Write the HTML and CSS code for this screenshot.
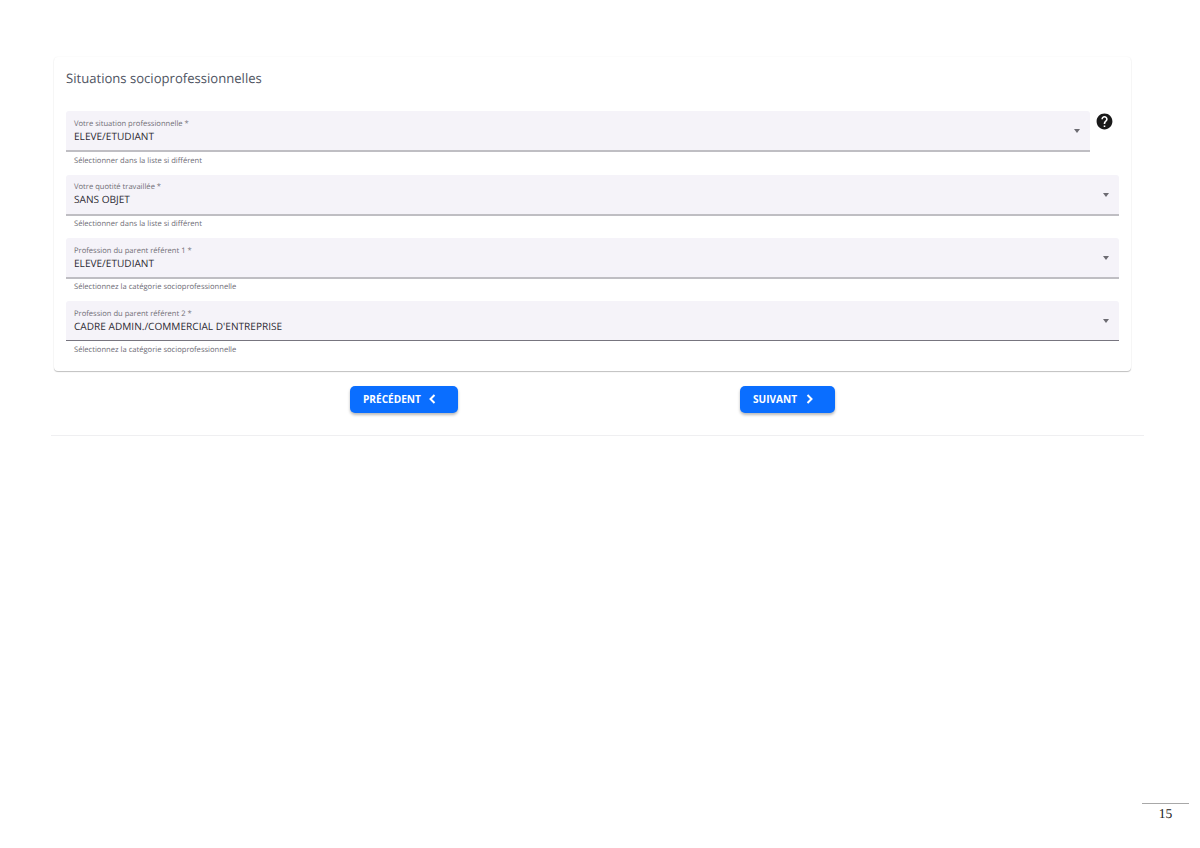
FILE: index.html
```html
<!DOCTYPE html>
<html lang="fr">
<head>
<meta charset="utf-8">
<title>Situations socioprofessionnelles</title>
<link rel="stylesheet" href="styles.css">
</head>
<body>
<main class="page">
  <section class="card">
    <h2 class="card-title">Situations socioprofessionnelles</h2>
    <div class="fields">
      <div class="field-row">
        <div class="field">
          <div class="control">
            <div class="control-text">
              <span class="label">Votre situation professionnelle *</span>
              <span class="value">ELEVE/ETUDIANT</span>
            </div>
            <span class="arrow"></span>
          </div>
          <div class="hint">Sélectionner dans la liste si différent</div>
        </div>
        <svg class="help" viewBox="0 0 24 24"><path fill="#1a1a1a" d="M12 2C6.48 2 2 6.48 2 12s4.48 10 10 10 10-4.48 10-10S17.52 2 12 2zm1 17h-2v-2h2v2zm2.07-7.75l-.9.92C13.45 12.9 13 13.5 13 15h-2v-.5c0-1.1.45-2.1 1.17-2.83l1.24-1.26c.37-.36.59-.86.59-1.41 0-1.1-.9-2-2-2s-2 .9-2 2H8c0-2.21 1.79-4 4-4s4 1.79 4 4c0 .88-.36 1.68-.93 2.25z"/></svg>
      </div>
      <div class="field-row">
        <div class="field">
          <div class="control">
            <div class="control-text">
              <span class="label">Votre quotité travaillée *</span>
              <span class="value">SANS OBJET</span>
            </div>
            <span class="arrow"></span>
          </div>
          <div class="hint">Sélectionner dans la liste si différent</div>
        </div>
      </div>
      <div class="field-row">
        <div class="field">
          <div class="control">
            <div class="control-text">
              <span class="label">Profession du parent référent 1 *</span>
              <span class="value">ELEVE/ETUDIANT</span>
            </div>
            <span class="arrow"></span>
          </div>
          <div class="hint">Sélectionnez la catégorie socioprofessionnelle</div>
        </div>
      </div>
      <div class="field-row">
        <div class="field">
          <div class="control control-dark">
            <div class="control-text">
              <span class="label">Profession du parent référent 2 *</span>
              <span class="value">CADRE ADMIN./COMMERCIAL D'ENTREPRISE</span>
            </div>
            <span class="arrow"></span>
          </div>
          <div class="hint">Sélectionnez la catégorie socioprofessionnelle</div>
        </div>
      </div>
    </div>
  </section>
  <div class="actions">
    <button class="btn btn-prev" type="button">PRÉCÉDENT
      <svg viewBox="0 0 12 12" width="12" height="12"><path fill="none" stroke="#fff" stroke-width="2" d="M8.5 2L4.5 6l4 4"/></svg>
    </button>
    <button class="btn btn-next" type="button">SUIVANT
      <svg viewBox="0 0 12 12" width="12" height="12"><path fill="none" stroke="#fff" stroke-width="2" d="M3.5 2l4 4-4 4"/></svg>
    </button>
  </div>
  <hr class="rule">
  <footer class="page-number">15</footer>
</main>
</body>
</html>
```
FILE: styles.css
```css
* { box-sizing: border-box; }
html, body { margin: 0; height: 100%; background: #fff; }
body { font-family: "Open Sans", "Liberation Sans", sans-serif; text-rendering: geometricPrecision; }
.page { display: flex; flex-direction: column; height: 848px; padding-top: 57px; overflow: hidden; }
.card {
  width: 1077px;
  height: 314px;
  margin-left: 54px;
  padding: 12px 12px 0;
  border-radius: 4px;
  background: #fff;
  box-shadow: 0 1px 1px rgba(0,0,0,.24), 0 0 2px rgba(0,0,0,.06);
}
.card-title { margin: 0 0 24.3px; font-size: 13.1px; line-height: 18px; font-weight: 400; color: #4f5462; }
.fields { display: flex; flex-direction: column; }
.field-row { display: flex; align-items: flex-start; height: 63.3px; }
.field { flex: 1; min-width: 0; }
.control {
  display: flex;
  align-items: center;
  justify-content: space-between;
  height: 41px;
  padding: 0 10px 0 8px;
  background: #f5f3f9;
  border-bottom: 2px solid #bfbec3;
  border-radius: 3px 3px 0 0;
}
.control-dark { border-bottom: 1px solid #77757f; height: 40px; }
.control-text { display: flex; flex-direction: column; }
.label { font-size: 7.6px; line-height: 11px; padding-top: 1.6px; margin-bottom: -1.1px; color: #706e76; }
.value { font-size: 10.1px; line-height: 15px; color: #2e2c34; }
.arrow { width: 0; height: 0; margin: 1px -0.2px 0 0; border-left: 3.7px solid transparent; border-right: 3.7px solid transparent; border-top: 4px solid #6c6b72; }
.hint { padding: 3.5px 0 0 8px; font-size: 7.6px; line-height: 11px; color: #6d6b75; }
.control-dark + .hint { padding-top: 4px; }
.help { flex: none; margin: 1px 5px 0 5px; width: 19px; height: 19px; }
.actions { display: flex; gap: 282px; margin-top: 15px; padding-left: 350px; }
.btn {
  display: flex;
  align-items: center;
  height: 27px;
  padding: 0 0 2px 13px;
  border: 0;
  border-radius: 5px;
  background: #0a6eff;
  color: #fff;
  font-family: inherit;
  font-size: 10.1px;
  font-weight: 700;
  box-shadow: 0 2px 3px rgba(0,0,0,.28);
}
.btn svg { margin: 1px 0 0 5px; }
.btn-prev { width: 108px; }
.btn-next { width: 95px; }
.btn-next svg { margin-left: 7px; }
.rule { width: 1093px; margin: 22px 0 0 51px; border: 0; border-top: 1px solid #efeff1; }
.page-number {
  align-self: flex-end;
  width: 47px;
  margin: 367px 11px 0 0;
  padding-top: 2px;
  border-top: 1px solid #a8a8a8;
  text-align: center;
  font-family: "Liberation Serif", serif;
  font-size: 13.5px;
  line-height: 16px;
  color: #222;
}
```
